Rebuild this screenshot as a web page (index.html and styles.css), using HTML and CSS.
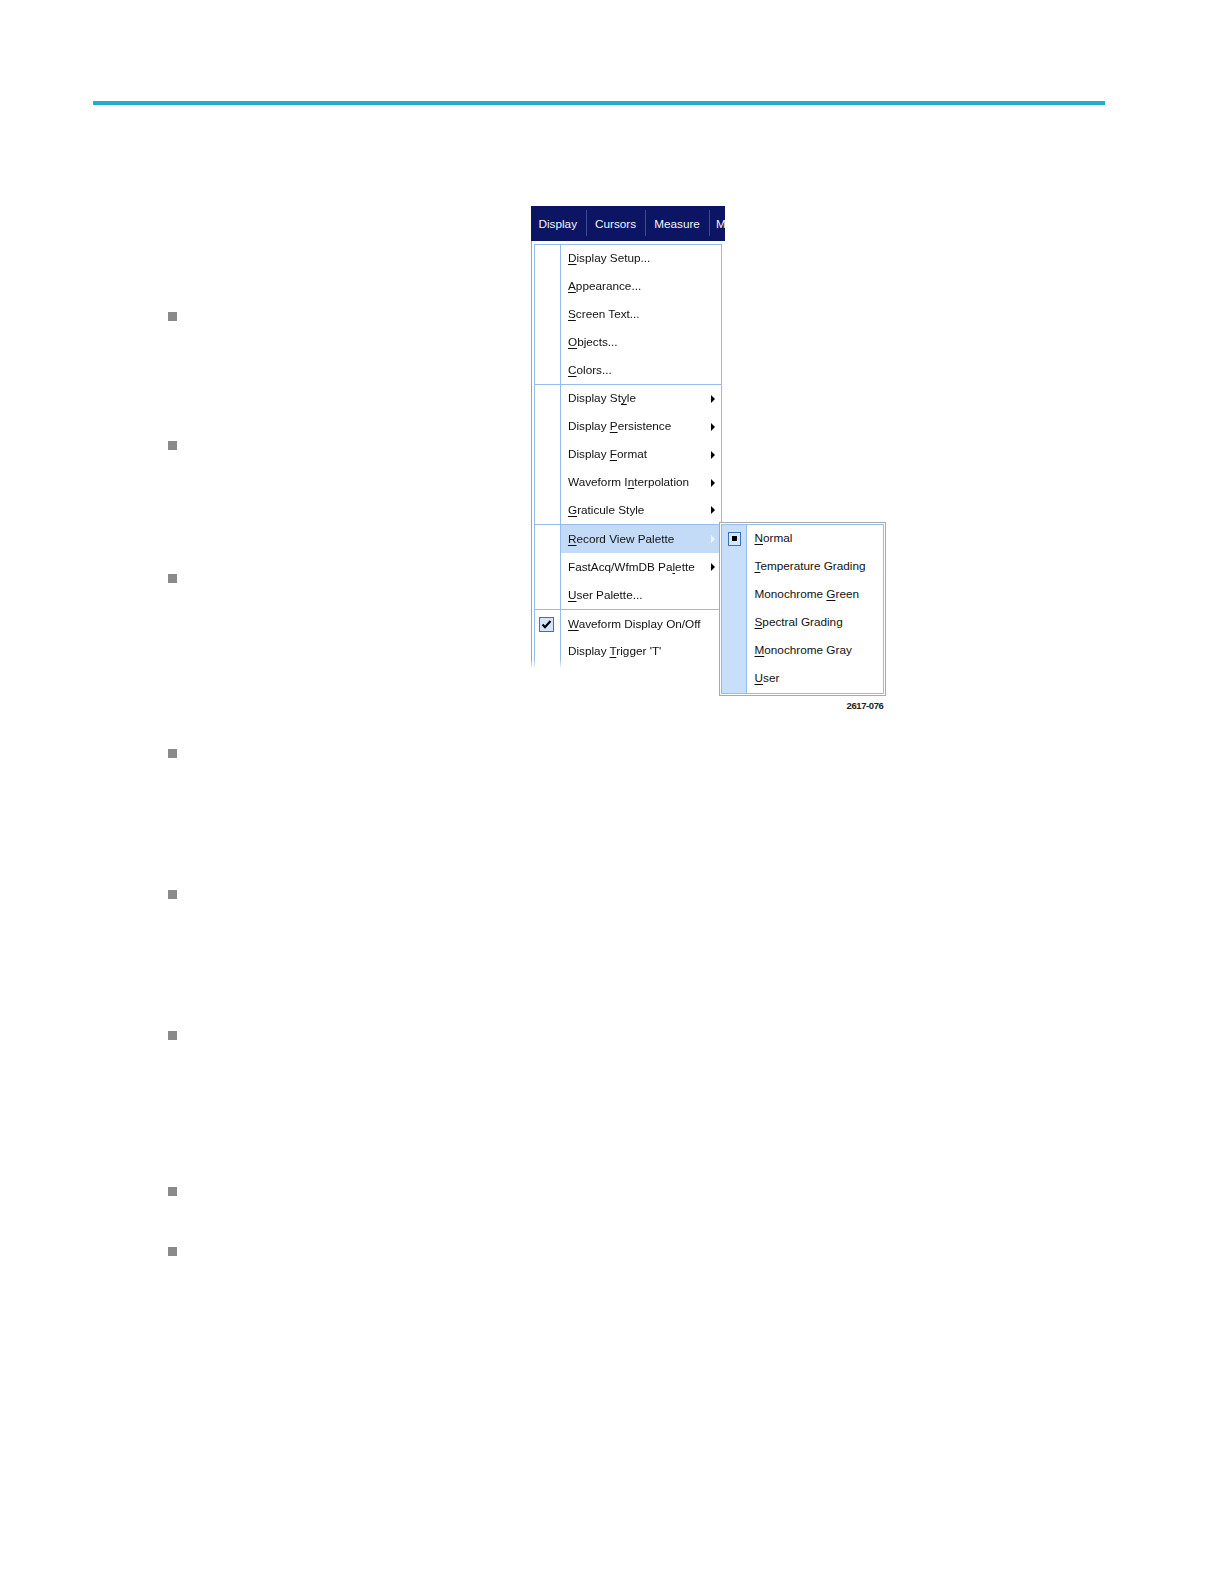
FILE: index.html
```html
<!DOCTYPE html>
<html lang="en">
<head>
<meta charset="utf-8">
<title>Display menu</title>
<link rel="stylesheet" href="styles.css">
</head>
<body>
<div class="page">
  <div class="rule"></div>
  <div class="content">
    <div class="top">
      <ul class="bullets side">
        <li class="bullet"></li>
        <li class="bullet"></li>
        <li class="bullet"></li>
      </ul>
      <div class="figure">
        <div class="menubar">
          <span class="mb-item">Display</span><span class="mb-sep"></span>
          <span class="mb-item">Cursors</span><span class="mb-sep"></span>
          <span class="mb-item">Measure</span><span class="mb-sep"></span>
          <span class="mb-item last">M</span>
        </div>
        <div class="menu">
          <div class="menu-inner">
            <div class="group">
              <div class="row"><span class="ic"></span><span class="lbl"><u>D</u>isplay Setup...</span></div>
              <div class="row"><span class="ic"></span><span class="lbl"><u>A</u>ppearance...</span></div>
              <div class="row"><span class="ic"></span><span class="lbl"><u>S</u>creen Text...</span></div>
              <div class="row"><span class="ic"></span><span class="lbl"><u>O</u>bjects...</span></div>
              <div class="row"><span class="ic"></span><span class="lbl"><u>C</u>olors...</span></div>
            </div>
            <div class="group">
              <div class="row"><span class="ic"></span><span class="lbl">Display St<u>y</u>le</span><span class="arrow"></span></div>
              <div class="row"><span class="ic"></span><span class="lbl">Display <u>P</u>ersistence</span><span class="arrow"></span></div>
              <div class="row"><span class="ic"></span><span class="lbl">Display <u>F</u>ormat</span><span class="arrow"></span></div>
              <div class="row"><span class="ic"></span><span class="lbl">Waveform I<u>n</u>terpolation</span><span class="arrow"></span></div>
              <div class="row"><span class="ic"></span><span class="lbl"><u>G</u>raticule Style</span><span class="arrow"></span></div>
            </div>
            <div class="group">
              <div class="row hl"><span class="ic"></span><span class="lbl"><u>R</u>ecord View Palette</span><span class="arrow light"></span></div>
              <div class="row"><span class="ic"></span><span class="lbl">FastAcq/WfmDB Pa<u>l</u>ette</span><span class="arrow"></span></div>
              <div class="row"><span class="ic"></span><span class="lbl"><u>U</u>ser Palette...</span></div>
            </div>
            <div class="group">
              <div class="row"><span class="ic"><span class="check"><svg viewBox="0 0 13 13" width="13" height="13"><path d="M2.5 6.5 L5 9.2 L10.5 3" fill="none" stroke="#000" stroke-width="2.2"/></svg></span></span><span class="lbl"><u>W</u>aveform Display On/Off</span></div>
              <div class="row"><span class="ic"></span><span class="lbl">Display <u>T</u>rigger 'T'</span></div>
            </div>
          </div>
        </div>
        <div class="submenu">
          <div class="sub-inner">
            <div class="srow"><span class="sic"><span class="radio"></span></span><span class="slbl"><u>N</u>ormal</span></div>
            <div class="srow"><span class="sic"></span><span class="slbl"><u>T</u>emperature Grading</span></div>
            <div class="srow"><span class="sic"></span><span class="slbl">Monochrome <u>G</u>reen</span></div>
            <div class="srow"><span class="sic"></span><span class="slbl"><u>S</u>pectral Grading</span></div>
            <div class="srow"><span class="sic"></span><span class="slbl"><u>M</u>onochrome Gray</span></div>
            <div class="srow"><span class="sic"></span><span class="slbl"><u>U</u>ser</span></div>
          </div>
        </div>
        <div class="caption">2617-076</div>
      </div>
    </div>
    <ul class="bullets lower">
      <li class="bullet"></li>
      <li class="bullet"></li>
      <li class="bullet"></li>
      <li class="bullet"></li>
      <li class="bullet"></li>
    </ul>
  </div>
</div>
</body>
</html>
```

FILE: styles.css
```css
* { box-sizing: border-box; }
html, body { margin: 0; padding: 0; background: #fff; }
body { font-family: "Liberation Sans", Arial, sans-serif; color: #111; }
.page { padding-top: 101px; padding-bottom: 200px; }
.rule { margin-left: 93px; width: 1012px; height: 4px; background: #22adca; }
.content { padding-left: 168px; }
.top { display: flex; margin-top: 101px; }
.bullets { list-style: none; margin: 0; padding: 0; }
.bullet { width: 9px; height: 9px; background: #8a8a8a; }
.side { width: 362.5px; padding-top: 106px; }
.side .bullet:nth-child(2) { margin-top: 120px; }
.side .bullet:nth-child(3) { margin-top: 123.5px; }
.lower { margin-top: 37.5px; }
.lower .bullet:nth-child(2) { margin-top: 131.5px; }
.lower .bullet:nth-child(3) { margin-top: 132.5px; }
.lower .bullet:nth-child(4) { margin-top: 146.5px; }
.lower .bullet:nth-child(5) { margin-top: 51.5px; }

.figure { position: relative; width: 355px; font-size: 11.75px; }
.menubar { width: 194px; height: 34.5px; background: #0c1564; display: flex; align-items: center; overflow: hidden; white-space: nowrap; color: #f2f3fa; }
.mb-item { padding: 0 9px 0 8px; flex: none; }
.mb-item.last { padding: 0 0 0 6px; }
.mb-sep { flex: none; width: 1px; height: 26px; background: #3d4a94; }

.menu { width: 192px; height: 428.5px; border-left: 1px solid #a3a3a3; padding: 3px 1px 0 2px; background: #fff;
  -webkit-mask-image: linear-gradient(to bottom, #000 calc(100% - 10px), transparent);
  mask-image: linear-gradient(to bottom, #000 calc(100% - 10px), transparent); }
.menu-inner { height: 100%; border: 1px solid #93bdec; border-bottom: none;
  background: linear-gradient(to right, transparent 25px, #93bdec 25px, #93bdec 26px, transparent 26px); }
.group + .group { border-top: 1px solid #93bdec; }
.row { display: flex; align-items: center; height: 27.9px; }
.ic { flex: none; width: 26px; height: 100%; display: flex; align-items: center; padding-left: 4px; }
.lbl { padding-left: 7.5px; padding-bottom: 2px; white-space: nowrap; }
.row.hl { background: linear-gradient(to right, transparent 26px, #c3dbf6 26px); }
.arrow { margin-left: auto; margin-right: 6px; width: 0; height: 0; border-left: 4px solid #000; border-top: 4px solid transparent; border-bottom: 4px solid transparent; }
.arrow.light { border-left-color: #eef5fd; }
.check { width: 15px; height: 15px; border: 1px solid #3d6fc0; background: #d3e4fb; display: flex; align-items: center; justify-content: center; }
u { text-decoration: underline; text-underline-offset: 2px; }

.submenu { position: absolute; left: 188px; top: 315.5px; width: 167px; height: 174px; border: 1px solid #a9a9a9; padding: 1px; background: #fff; }
.sub-inner { height: 100%; border: 1px solid #93bdec; background: linear-gradient(to right, #c7dffa 24px, #93bdec 24px, #93bdec 25px, #fff 25px); }
.srow { display: flex; align-items: center; height: 28px; }
.sic { flex: none; width: 25px; height: 100%; display: flex; align-items: center; padding-left: 6px; }
.slbl { padding-left: 8px; padding-bottom: 2px; white-space: nowrap; }
.radio { width: 13px; height: 14px; border: 1px solid #3d6fc0; background: #d8e8fc; display: flex; align-items: center; justify-content: center; }
.radio::after { content: ""; width: 5px; height: 5px; background: #000; }

.caption { margin-top: 30.5px; text-align: right; padding-right: 2px; font-size: 9.5px; font-weight: bold; line-height: 12px; letter-spacing: -0.4px; color: #222; }
```
